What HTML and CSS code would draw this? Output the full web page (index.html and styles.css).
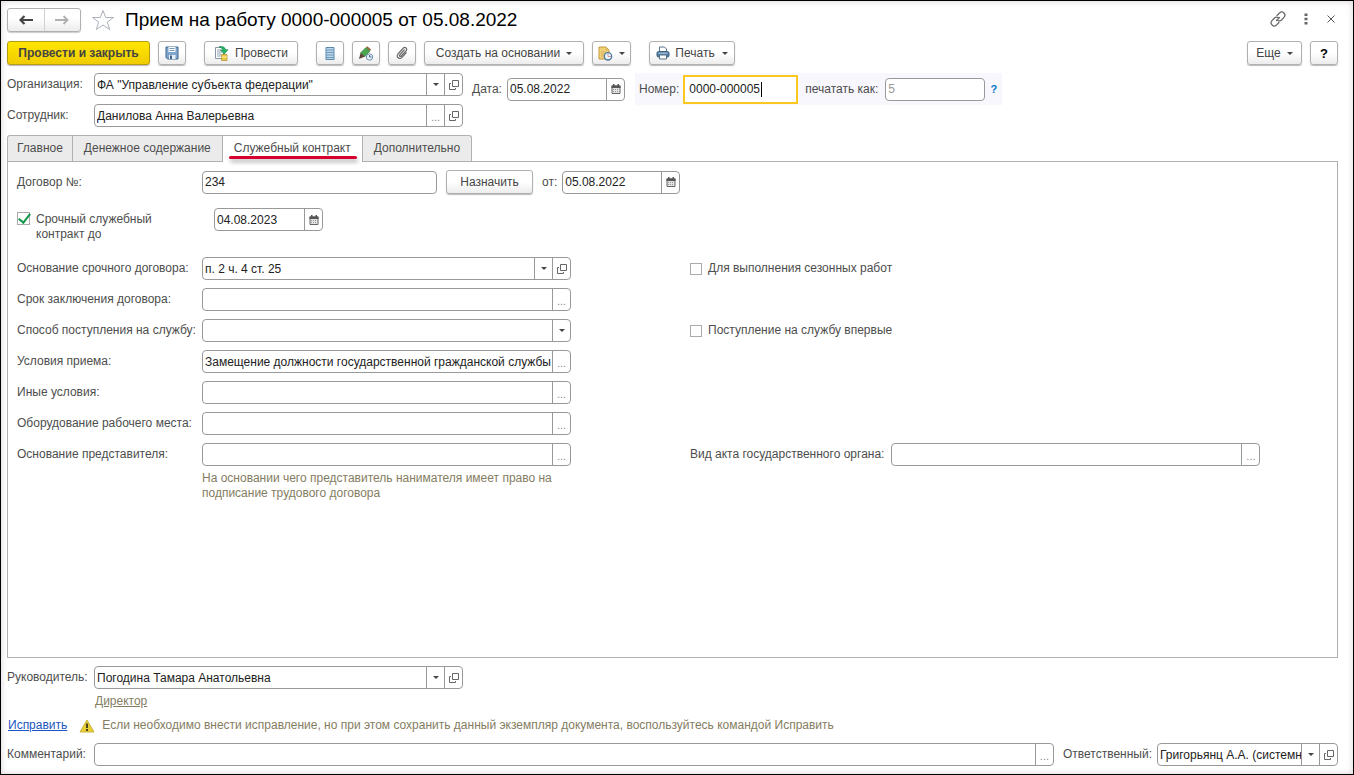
FILE: index.html
```html
<!DOCTYPE html>
<html lang="ru">
<head>
<meta charset="utf-8">
<meta name="viewport" content="width=device-width, initial-scale=1">
<title>Прием на работу 0000-000005 от 05.08.2022</title>
<link rel="stylesheet" href="styles.css">
</head>
<body>
<svg class="sprite" aria-hidden="true">
  <symbol id="caret" viewBox="0 0 6 3"><path d="M0 0h6L3 3z" fill="currentColor"/></symbol>
  <symbol id="open" viewBox="0 0 10 10"><path d="M3.5.5h6v6h-6zM2 3.500H.5v6h6V8" fill="none" stroke="#666"/></symbol>
  <symbol id="calendar" viewBox="0 0 10 10"><path d="M1 2h8v7.500H1z" fill="#e4e4e4" stroke="#666"/><path d="M.5 1.500h9V4h-9zM2 0h1.500v2H2zM6.500 0H8v2H6.500z" fill="#555"/><path d="M2 5.500h6M2 7.500h6" stroke="#999" stroke-dasharray="1 1"/></symbol>
</svg>
<main class="window">
  <header class="titlebar">
    <div class="nav">
      <button type="button" class="nav-btn" aria-label="Назад"><svg width="14" height="10" viewBox="0 0 14 10"><path d="M5.500 1 1.500 5l4 4M2 5h12" fill="none" stroke="#444" stroke-width="2.200"/></svg></button>
      <button type="button" class="nav-btn" aria-label="Вперед"><svg width="14" height="10" viewBox="0 0 14 10"><path d="M8.500 1 12.500 5l-4 4M12 5H0" fill="none" stroke="#b0b0b0" stroke-width="1.800"/></svg></button>
    </div>
    <button type="button" class="plain star" aria-label="В избранное"><svg width="24" height="22" viewBox="0 0 24 22"><path d="m12 1.500 2.700 7H22.500l-6.200 4.600 2.400 7.400L12 16l-6.700 4.500 2.400-7.400L1.500 8.500h7.800z" fill="#fff" stroke="#aab1ba"/></svg></button>
    <h1 class="title">Прием на работу 0000-000005 от 05.08.2022</h1>
    <div class="window-tools">
      <button type="button" class="plain" aria-label="Ссылка"><svg width="18" height="18" viewBox="0 0 18 18"><g fill="none" stroke="#666" stroke-width="1.200" stroke-linecap="round"><path d="M8 5.500 10.500 3c3-2.800 7.300 1.300 4.500 4.300L12.500 10c-1.200 1.100-2.500 1.100-3.700.4"/><path d="M10 12.500 7.500 15c-3 2.800-7.300-1.300-4.500-4.300L5.500 8c1.200-1.100 2.500-1.100 3.700-.4"/><path d="m7.500 10.500 3-3"/></g></svg></button>
      <button type="button" class="plain" aria-label="Дополнительные действия"><svg width="4" height="12" viewBox="0 0 4 12"><path d="M.5.5h3v2.500h-3zM.5 4.800h3v2.500h-3zM.5 9h3v2.500h-3z" fill="#666"/></svg></button>
      <button type="button" class="plain" aria-label="Закрыть"><svg width="8" height="8" viewBox="0 0 8 8"><path d="m.5.5 7 7m0-7-7 7" stroke="#555"/></svg></button>
    </div>
  </header>

  <div class="toolbar">
    <button type="button" class="btn primary">Провести и закрыть</button>
    <button type="button" class="btn icon-btn" aria-label="Записать"><svg width="14" height="14" viewBox="0 0 14 14"><path d="M1 1h12v12H2.500L1 11.500z" fill="#7fa5cc" stroke="#40698f"/><path d="M3.500 1h7v5h-7z" fill="#fff"/><path d="M4.500 2.500h5M4.500 4.500h5" stroke="#7893ac"/><path d="M4 9h6.500v4H4z" fill="#e7eef5"/><path d="M5 9.500h2V13H5z" fill="#40698f"/></svg></button>
    <button type="button" class="btn post"><svg width="15" height="15" viewBox="0 0 15 15"><path d="M1.500 1.500h8v11h-8z" fill="#fff" stroke="#8795a4"/><path d="M3 4h4M3 6h5M3 8h4M3 10h4" stroke="#8da0b3"/><path d="M7.500 8.500h5.500v6H7.500z" fill="#e9c847" stroke="#b18b24" stroke-width=".7"/><path d="M7.500 11h5.500" stroke="#fff2a8"/><path d="M5 .7c4-.7 6 .4 6.500 3H14L10.300 8 6.500 4h2.300C8.500 2.500 7 1.700 5 .7z" fill="#27b366" stroke="#12864a" stroke-width=".6"/></svg>Провести</button>
    <button type="button" class="btn icon-btn" aria-label="Движения документа"><svg width="10" height="13" viewBox="0 0 10 13"><path d="M1 .5h8v12H1z" fill="#b9d5ea" stroke="#5a87ac"/><path d="M1 3h8M1 5.500h8M1 8h8M1 10.500h8" stroke="#6f9abb"/></svg></button>
    <button type="button" class="btn icon-btn" aria-label="Редактировать"><svg width="16" height="15" viewBox="0 0 16 15"><path d="M8 1.500 12 5l-5 5.500-4.500-3.500z" fill="#4ba650" stroke="#2f7c3a" stroke-width=".7"/><path d="m8 1.500 1.300-1.300L13 3.500 12 5z" fill="#9b653c"/><path d="M2.500 7 7 10.500 1 13z" fill="#5d4538"/><circle cx="11.500" cy="11" r="3.200" fill="#e7f1f8" stroke="#6d91ae"/><path d="M11.500 9v2h2" fill="none" stroke="#456c8c"/></svg></button>
    <button type="button" class="btn icon-btn" aria-label="Файлы"><svg width="12" height="14" viewBox="0 0 12 14"><path d="m8.500 3.500-4.700 5.300c-.9 1.200.5 2.300 1.500 1.200L10 4.800C11.700 2.500 9.200.2 7.200 2.200L2 8c-2.200 3 1.300 6 4 3.300l4.500-5" fill="none" stroke="#666" stroke-width="1.200"/></svg></button>
    <button type="button" class="btn create">Создать на основании<svg class="caret"><use href="#caret"/></svg></button>
    <button type="button" class="btn remind" aria-label="Напоминание"><svg width="15" height="15" viewBox="0 0 15 15"><path d="M1 1h7l3 3v9H1z" fill="#efd078" stroke="#c59a3c"/><path d="M8 1v3h3M3 6h5M3 8h3M3 10h3" fill="none" stroke="#d8b563"/><circle cx="10" cy="10.300" r="3.700" fill="#eef5fb" stroke="#4d78a0" stroke-width="1.300"/><path d="M10 7.500v3h3" fill="none" stroke="#c99"/></svg><svg class="caret"><use href="#caret"/></svg></button>
    <button type="button" class="btn print"><svg width="14" height="14" viewBox="0 0 14 14"><path d="M3.500 1h5l2 2v3h-7z" fill="#fff" stroke="#56708a"/><rect x="1" y="5.500" width="12" height="5.500" rx="1.500" fill="#517fa8" stroke="#3d617f"/><path d="M3.500 9h7v4h-7z" fill="#fff" stroke="#56708a"/><path d="M2.500 7.200h9" stroke="#bed1e2"/></svg>Печать<svg class="caret"><use href="#caret"/></svg></button>
    <button type="button" class="btn more">Еще<svg class="caret"><use href="#caret"/></svg></button>
    <button type="button" class="btn icon-btn help" aria-label="Справка">?</button>
  </div>

  <section class="head">
    <div class="head-fields">
      <label for="org">Организация:</label>
      <div class="field"><input id="org" type="text" value='ФА "Управление субъекта федерации"'><button type="button" aria-label="Выбрать"><svg class="caret"><use href="#caret"/></svg></button><button type="button" aria-label="Открыть"><svg class="glyph"><use href="#open"/></svg></button></div>
      <label for="emp">Сотрудник:</label>
      <div class="field"><input id="emp" type="text" value="Данилова Анна Валерьевна"><button type="button" class="dots" aria-label="Выбрать">...</button><button type="button" aria-label="Открыть"><svg class="glyph"><use href="#open"/></svg></button></div>
    </div>
    <div class="date-group">
      <label for="date">Дата:</label>
      <div class="field date"><input id="date" type="text" value="05.08.2022"><button type="button" aria-label="Календарь"><svg class="glyph"><use href="#calendar"/></svg></button></div>
    </div>
    <div class="number-group">
      <label for="num">Номер:</label>
      <div class="active-field"><input id="num" type="text" value="0000-000005"><span class="text-cursor"></span></div>
      <label for="print-as">печатать как:</label>
      <div class="field print-as"><input id="print-as" type="text" value="5"></div>
      <button type="button" class="plain hint-btn">?</button>
    </div>
  </section>

  <nav class="tabs" role="tablist">
    <button type="button" class="tab" role="tab">Главное</button>
    <button type="button" class="tab" role="tab">Денежное содержание</button>
    <button type="button" class="tab current" role="tab" aria-selected="true">Служебный контракт</button>
    <button type="button" class="tab" role="tab">Дополнительно</button>
  </nav>

  <section class="panel">
    <div class="line contract">
      <label class="name" for="contract">Договор №:</label>
      <div class="field contract-no"><input id="contract" type="text" value="234"></div>
      <button type="button" class="btn assign">Назначить</button>
      <label for="from">от:</label>
      <div class="field date"><input id="from" type="text" value="05.08.2022"><button type="button" aria-label="Календарь"><svg class="glyph"><use href="#calendar"/></svg></button></div>
    </div>
    <div class="line term">
      <label class="check term-check"><input type="checkbox" checked><span>Срочный служебный контракт до</span></label>
      <div class="field until"><input type="text" aria-label="Срочный служебный контракт до" value="04.08.2023"><button type="button" aria-label="Календарь"><svg class="glyph"><use href="#calendar"/></svg></button></div>
    </div>
    <div class="form">
      <div class="line"><label class="name" for="basis">Основание срочного договора:</label>
        <div class="field long"><input id="basis" type="text" value="п. 2 ч. 4 ст. 25"><button type="button" aria-label="Выбрать"><svg class="caret"><use href="#caret"/></svg></button><button type="button" aria-label="Открыть"><svg class="glyph"><use href="#open"/></svg></button></div>
        <label class="check"><input type="checkbox"><span>Для выполнения сезонных работ</span></label></div>
      <div class="line"><label class="name" for="period">Срок заключения договора:</label>
        <div class="field long"><input id="period" type="text"><button type="button" class="dots" aria-label="Выбрать">...</button></div></div>
      <div class="line"><label class="name" for="way">Способ поступления на службу:</label>
        <div class="field long"><input id="way" type="text"><button type="button" aria-label="Выбрать"><svg class="caret"><use href="#caret"/></svg></button></div>
        <label class="check"><input type="checkbox"><span>Поступление на службу впервые</span></label></div>
      <div class="line"><label class="name" for="cond">Условия приема:</label>
        <div class="field long"><input id="cond" type="text" value="Замещение должности государственной гражданской службы"><button type="button" class="dots" aria-label="Выбрать">...</button></div></div>
      <div class="line"><label class="name" for="other">Иные условия:</label>
        <div class="field long"><input id="other" type="text"><button type="button" class="dots" aria-label="Выбрать">...</button></div></div>
      <div class="line"><label class="name" for="equip">Оборудование рабочего места:</label>
        <div class="field long"><input id="equip" type="text"><button type="button" class="dots" aria-label="Выбрать">...</button></div></div>
      <div class="line"><label class="name" for="repr">Основание представителя:</label>
        <div class="field long"><input id="repr" type="text"><button type="button" class="dots" aria-label="Выбрать">...</button></div>
        <div class="act"><label for="act">Вид акта государственного органа:</label>
          <div class="field long"><input id="act" type="text"><button type="button" class="dots" aria-label="Выбрать">...</button></div></div></div>
    </div>
    <p class="note">На основании чего представитель нанимателя имеет право на подписание трудового договора</p>
  </section>

  <footer class="foot">
    <div class="foot-line">
      <label class="foot-name" for="boss">Руководитель:</label>
      <div class="field boss"><input id="boss" type="text" value="Погодина Тамара Анатольевна"><button type="button" aria-label="Выбрать"><svg class="caret"><use href="#caret"/></svg></button><button type="button" aria-label="Открыть"><svg class="glyph"><use href="#open"/></svg></button></div>
    </div>
    <a class="position" href="#">Директор</a>
    <div class="fix">
      <a class="fix-link" href="#">Исправить</a>
      <svg width="16" height="14" viewBox="0 0 16 14"><path d="M8 1 15 13H1z" fill="#e8cf35" stroke="#c9b23c" stroke-linejoin="round"/><path d="M8 4.500V9M8 10v2" stroke="#4b4420" stroke-width="2"/></svg>
      <span>Если необходимо внести исправление, но при этом сохранить данный экземпляр документа, воспользуйтесь командой Исправить</span>
    </div>
    <div class="foot-line">
      <label class="foot-name" for="comment">Комментарий:</label>
      <div class="field comment"><input id="comment" type="text"><button type="button" class="dots" aria-label="Выбрать">...</button></div>
      <label class="resp-name" for="resp">Ответственный:</label>
      <div class="field resp"><input id="resp" type="text" value="Григорьянц А.А. (системный)"><button type="button" aria-label="Выбрать"><svg class="caret"><use href="#caret"/></svg></button><button type="button" aria-label="Открыть"><svg class="glyph"><use href="#open"/></svg></button></div>
    </div>
  </footer>
</main>
</body>
</html>
```
FILE: styles.css
```css
* { box-sizing: border-box; }

body {
  margin: 0;
  color: #4d4d4d;
  font: 12px/15px "Liberation Sans", Arial, sans-serif;
}

button, input { font: inherit; color: inherit; }
button { cursor: pointer; }

.sprite { display: none; }

.window {
  display: flex;
  flex-direction: column;
  min-height: 100vh;
  padding: 6px 15px 8px 6px;
  border: 1px solid #000;
  background: #fff;
  box-shadow: inset 0 0 6px #d8cfd2;
}

/* Title bar */
.titlebar { display: flex; align-items: center; height: 26px; }
.nav {
  display: flex;
  width: 74px;
  height: 24px;
  border: 1px solid #b0b0b0;
  border-radius: 3px;
  background: linear-gradient(#fff 40%, #ececec);
  box-shadow: 0 1px 1px #ccc;
}
.nav-btn {
  display: flex;
  flex: 1;
  align-items: center;
  justify-content: center;
  padding: 0;
  border: 0;
  background: none;
}
.nav-btn + .nav-btn { border-left: 1px solid #d0d0d0; }
.plain {
  display: flex;
  align-items: center;
  justify-content: center;
  padding: 0;
  border: 0;
  background: none;
}
.star { margin-left: 10px; }
.title {
  margin: 0 0 0 10px;
  color: #000;
  font-size: 19px;
  font-weight: 400;
  line-height: 24px;
  white-space: nowrap;
}
.window-tools { display: flex; align-items: center; gap: 19px; margin-left: auto; padding: 0 3px 2px 0; }
.window-tools .plain:first-child { margin-right: -2px; }

/* Command bar */
.toolbar { display: flex; gap: 8px; margin-top: 8px; }
.btn {
  display: flex;
  flex: none;
  align-items: center;
  justify-content: center;
  height: 24px;
  padding: 0;
  border: 1px solid #b0b0b0;
  border-radius: 3px;
  background: linear-gradient(#fff 50%, #ececec);
  box-shadow: 0 1px 1px #bbb;
  color: #444;
}
.btn .caret { margin-left: 6px; }
.primary {
  width: 143px;
  border-color: #b59b12;
  background: linear-gradient(#ffe600, #f0cc00);
  font-weight: 700;
}
.icon-btn { width: 28px; }
.post { gap: 6px; width: 94px; margin: 0 10px; }
.create { width: 160px; }
.remind { width: 39px; }
.print { gap: 5px; width: 86px; margin-left: 10px; }
.print .caret { margin-left: 2px; }
.more { width: 55px; margin-left: auto; }
.help { color: #000; font-size: 13px; font-weight: 700; }
.caret { width: 6px; height: 3px; color: #444; }
.glyph { width: 10px; height: 10px; }

/* Input fields with attached buttons */
.field {
  display: flex;
  height: 23px;
  border: 1px solid #999;
  border-radius: 4px;
  background: #fff;
  overflow: hidden;
}
.field input {
  flex: 1;
  min-width: 0;
  padding: 1px 0 0 2px;
  border: 0;
  outline: 0;
  background: none;
  color: #222;
}
.field button {
  display: flex;
  flex: none;
  align-items: center;
  justify-content: center;
  width: 18px;
  padding: 0;
  border: 0;
  border-left: 1px solid #999;
  background: none;
}
.field .dots { padding-top: 3px; color: #888; font-size: 11px; }
.date { width: 118px; }

/* Document header */
.head { display: flex; align-items: flex-start; margin-top: 8px; }
.head-fields {
  display: grid;
  grid-template-columns: 87px 369px;
  row-gap: 8px;
  align-items: center;
}
.date-group, .number-group { display: flex; align-items: center; height: 32px; }
.date-group { gap: 5px; margin-left: 9px; }
.date-group label { width: 30px; white-space: nowrap; }
.number-group { margin-left: 10px; padding: 0 5px 0 4px; background: #f7f7fd; }
.number-group label { white-space: nowrap; }
.active-field {
  display: flex;
  align-items: center;
  position: relative;
  width: 115px;
  height: 29px;
  margin: 0 7px 0 4px;
  border: 2px solid #fac81e;
  background: #fff;
}
.active-field input { width: 100%; padding: 0 4px; border: 0; outline: 0; background: none; color: #222; }
.text-cursor { position: absolute; left: 76px; width: 1px; height: 15px; background: #000; }
.print-as { width: 100px; margin-left: 7px; }
.print-as input { color: #999; }
.hint-btn { width: 7px; margin-left: 5px; color: #0a7ac4; font-size: 11px; font-weight: 700; }

/* Tabs */
.tabs { display: flex; margin-top: 8px; }
.tab {
  position: relative;
  height: 26px;
  padding: 0 11px;
  border: 1px solid #b0b0b0;
  border-bottom: 0;
  border-left-width: 0;
  background: #ebebeb;
  white-space: nowrap;
}
.tab:first-child { padding: 0 9px; border-left-width: 1px; border-radius: 3px 0 0; }
.tab:last-child { border-radius: 0 3px 0 0; }
.tab.current { margin-bottom: -1px; height: 27px; padding-bottom: 1px; background: #fff; z-index: 1; }
.tab.current::after {
  content: "";
  position: absolute;
  right: 5px;
  bottom: 3px;
  left: 6px;
  height: 3px;
  border-radius: 2px;
  background: #d8002c;
  box-shadow: 1px 3px 4px #aaa;
}

/* Contract page */
.panel { flex: 1; padding: 8px 9px; border: 1px solid #b0b0b0; }
.line { display: flex; align-items: center; }
.name { flex: none; width: 185px; white-space: nowrap; }
.contract-no { width: 235px; }
.assign { width: 87px; margin: 0 9px; }
.contract .date { margin-left: 5px; }
.term { align-items: flex-start; margin-top: 14px; }
.term-check { width: 197px; padding: 4px 50px 0 0; }
.until { width: 109px; }
.form { display: grid; gap: 8px; margin-top: 15px; }
.long { flex: none; width: 369px; }
.form .check, .act { margin-left: 119px; }
.act { display: flex; align-items: center; gap: 7px; white-space: nowrap; }
.check { display: flex; align-items: flex-start; gap: 6px; }
.check input {
  flex: none;
  display: grid;
  place-items: center;
  appearance: none;
  width: 12px;
  height: 12px;
  margin: 2px 0 0;
  border: 1px solid #aaa;
  background: #fff;
}
.term-check input { width: 13px; height: 13px; margin-top: 0; }
.check input:checked::before {
  content: "";
  width: 5px;
  height: 10px;
  margin: -4px 0 0 2px;
  border: solid #12984b;
  border-width: 0 2px 2px 0;
  transform: rotate(38deg);
}
.note { width: 380px; margin: 5px 0 0 185px; color: #847d5f; }

/* Footer */
.foot { display: flex; flex-direction: column; margin-top: 8px; color: #847d5f; }
.foot-line { display: flex; align-items: center; color: #4d4d4d; }
.foot-name { width: 87px; white-space: nowrap; }
.boss { width: 369px; }
.position { align-self: flex-start; margin: 5px 0 0 88px; color: inherit; }
.fix { display: flex; align-items: center; margin: 9px 0 10px; }
.fix-link { margin: 0 12px 0 1px; color: #1c55c0; }
.fix span { margin-left: 7px; }
.comment { flex: 1; }
.resp-name { margin: 0 5px 0 9px; white-space: nowrap; }
.resp { width: 181px; }
```
